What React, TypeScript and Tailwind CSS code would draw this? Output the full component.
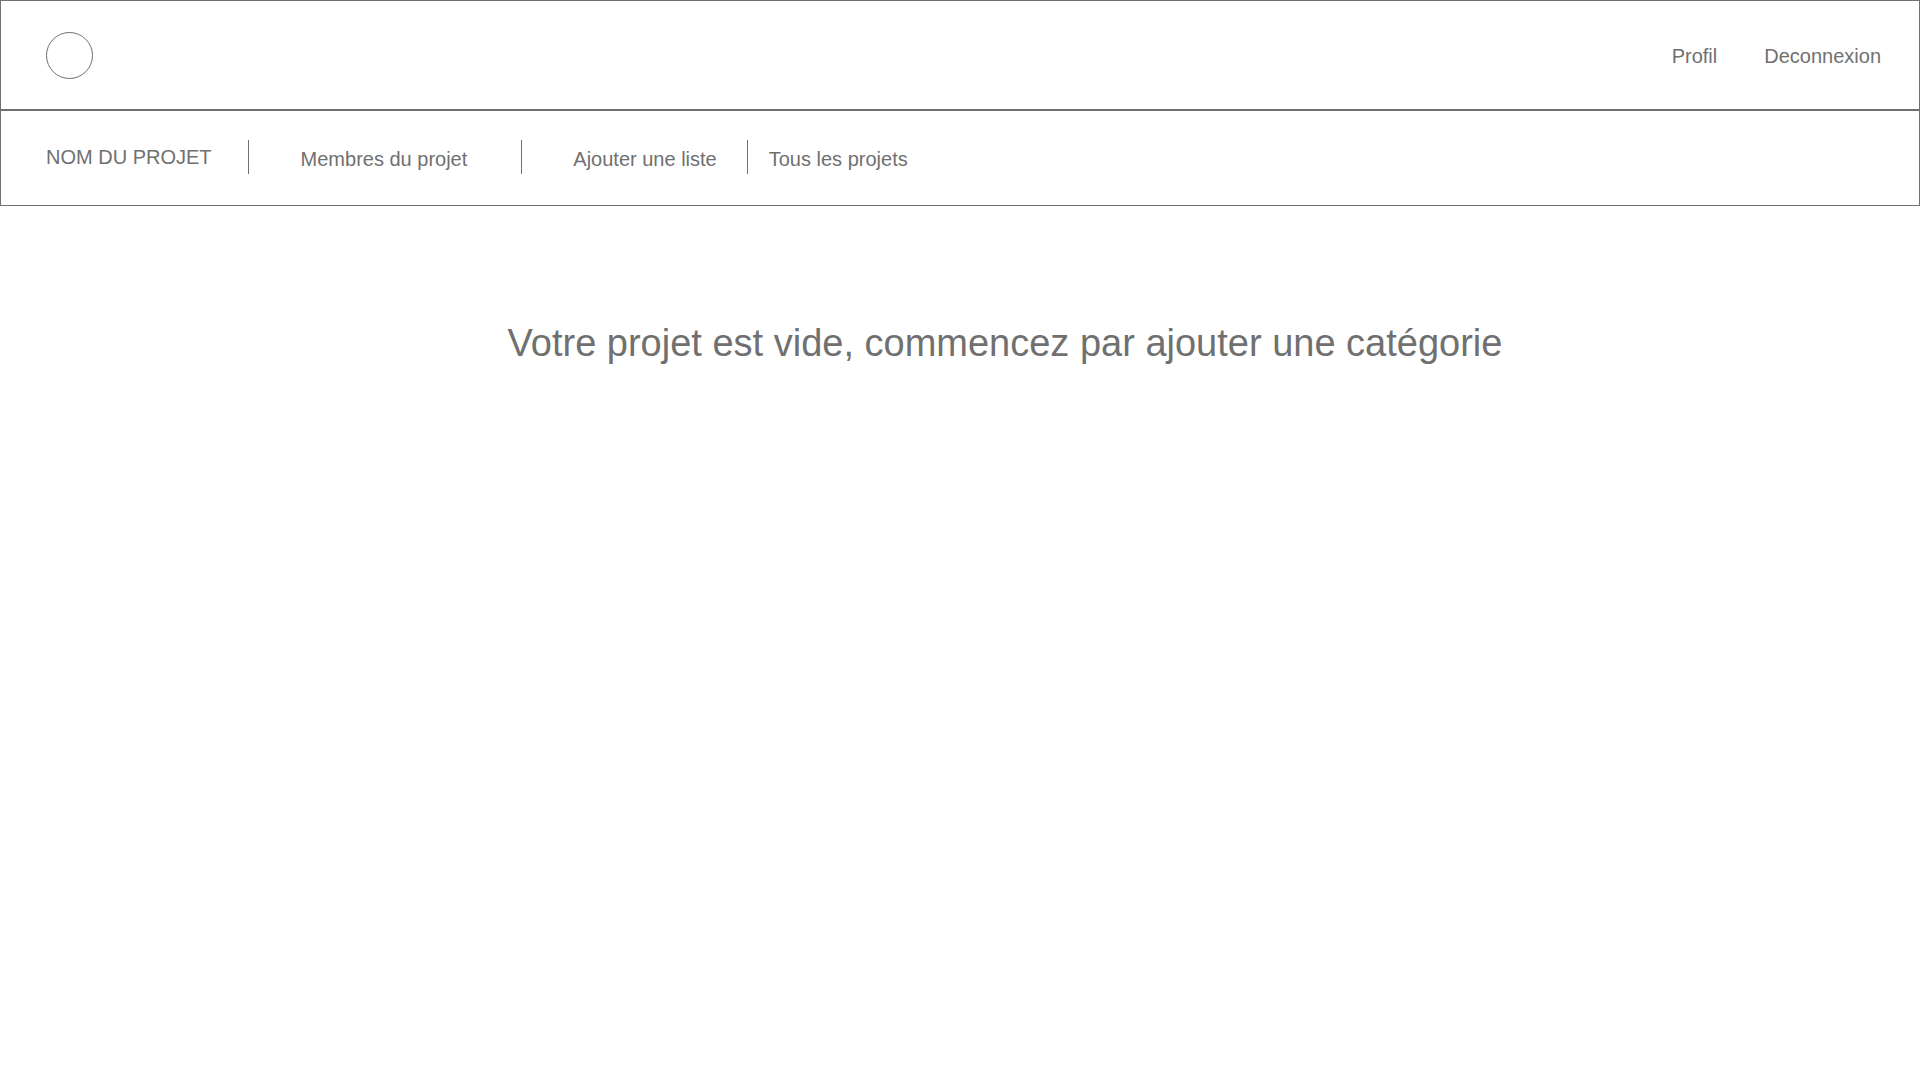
function Divider() {
  return <span aria-hidden="true" className="h-[34px] w-px bg-[#707070]" />;
}

export default function App() {
  return (
    <div className="min-h-screen bg-white font-['Liberation_Sans',Arial,sans-serif] text-xl leading-6 text-[#707070]">
      <header>
        <div className="flex h-[110px] items-center justify-between border border-[#707070] pr-[38px] pl-[45px]">
          <a href="#" aria-label="Accueil" className="size-[47px] rounded-full border border-[#707070]" />
          <nav className="flex gap-[47px] pt-0.5">
            <a href="#profil" className="hover:underline">Profil</a>
            <a href="#deconnexion" className="hover:underline">Deconnexion</a>
          </nav>
        </div>
        <nav className="flex h-24 items-center border border-[#707070] pb-[3px] pl-[45px]">
          <span className="mr-9">NOM DU PROJET</span>
          <Divider />
          <a href="#membres" className="mr-[54px] ml-[52px] pt-1 hover:underline">Membres du projet</a>
          <Divider />
          <a href="#liste" className="mr-[30px] ml-[51px] pt-1 hover:underline">Ajouter une liste</a>
          <Divider />
          <a href="#projets" className="ml-[21px] pt-1 hover:underline">Tous les projets</a>
        </nav>
      </header>
      <main className="pt-28 pl-[90px] text-center">
        <h1 className="text-[38px] leading-[50px]">Votre projet est vide, commencez par ajouter une catégorie</h1>
      </main>
    </div>
  );
}
